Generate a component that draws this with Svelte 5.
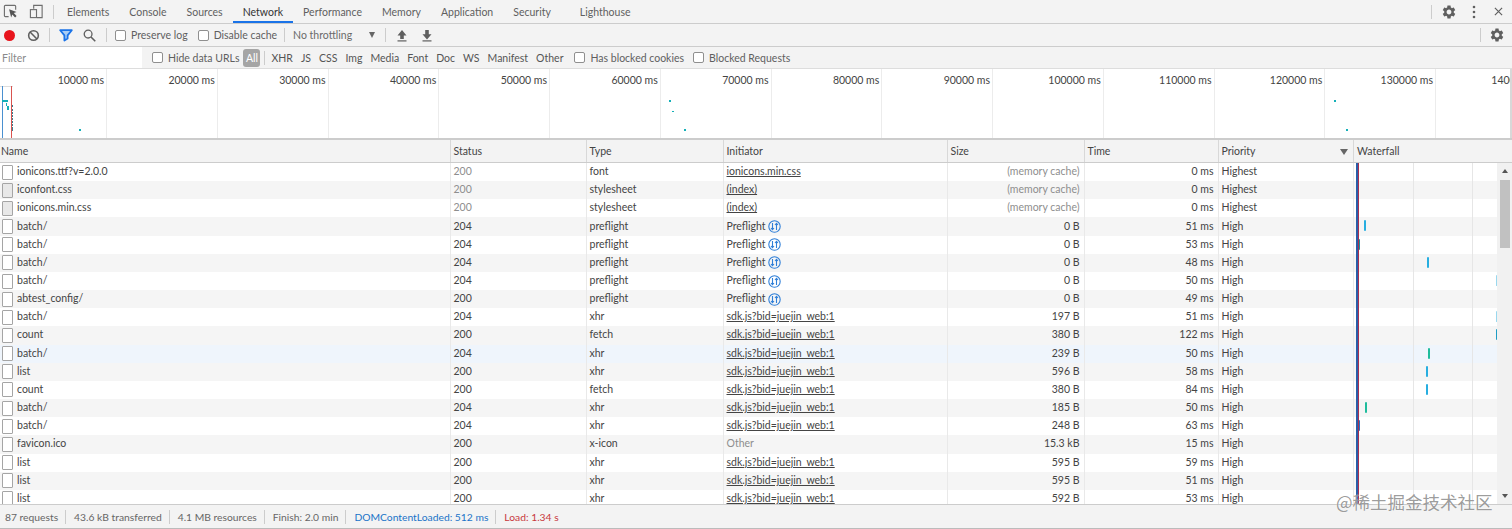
<script lang="ts">
	const gear =
		'M19.14 12.94c.04-.3.06-.61.06-.94 0-.32-.02-.64-.07-.94l2.03-1.58c.18-.14.23-.41.12-.61l-1.92-3.32c-.12-.22-.37-.29-.59-.22l-2.39.96c-.5-.38-1.03-.7-1.62-.94l-.36-2.54c-.04-.24-.24-.41-.48-.41h-3.84c-.24 0-.43.17-.47.41l-.36 2.54c-.59.24-1.13.57-1.62.94l-2.39-.96c-.22-.08-.47 0-.59.22L2.74 8.87c-.12.21-.08.47.12.61l2.03 1.58c-.05.3-.09.63-.09.94s.02.64.07.94l-2.03 1.58c-.18.14-.23.41-.12.61l1.92 3.32c.12.22.37.29.59.22l2.39-.96c.5.38 1.03.7 1.62.94l.36 2.54c.05.24.24.41.48.41h3.84c.24 0 .44-.17.47-.41l.36-2.54c.59-.24 1.13-.56 1.62-.94l2.39.96c.22.08.47 0 .59-.22l1.92-3.32c.12-.22.07-.47-.12-.61l-2.01-1.58zM12 15.6c-1.98 0-3.6-1.62-3.6-3.6s1.62-3.6 3.6-3.6 3.6 1.62 3.6 3.6-1.62 3.6-3.6 3.6z';

	const tabs = ['Elements', 'Console', 'Sources', 'Network', 'Performance', 'Memory', 'Application', 'Security', 'Lighthouse'];
	const types = ['XHR', 'JS', 'CSS', 'Img', 'Media', 'Font', 'Doc', 'WS', 'Manifest', 'Other'];
	const ticks = [10, 20, 30, 40, 50, 60, 70, 80, 90, 100, 110, 120, 130, 140];
	const columns = ['Name', 'Status', 'Type', 'Initiator', 'Size', 'Time', 'Priority', 'Waterfall'];

	const sdk = 'sdk.js?bid=juejin_web:1';
	type Bar = { left: number; color: string; w?: number };
	type Row = {
		name: string; status: number; type: string; init: string; size: string; time: string; prio: string;
		cached?: boolean; css?: boolean; hover?: boolean; bar?: Bar;
	};
	const rows: Row[] = [
		{ name: 'ionicons.ttf?v=2.0.0', status: 200, type: 'font', init: 'ionicons.min.css', size: '(memory cache)', time: '0 ms', prio: 'Highest', cached: true },
		{ name: 'iconfont.css', status: 200, type: 'stylesheet', init: '(index)', size: '(memory cache)', time: '0 ms', prio: 'Highest', cached: true, css: true },
		{ name: 'ionicons.min.css', status: 200, type: 'stylesheet', init: '(index)', size: '(memory cache)', time: '0 ms', prio: 'Highest', cached: true, css: true },
		{ name: 'batch/', status: 204, type: 'preflight', init: 'Preflight', size: '0 B', time: '51 ms', prio: 'High', bar: { left: 10, color: '#27aee0' } },
		{ name: 'batch/', status: 204, type: 'preflight', init: 'Preflight', size: '0 B', time: '53 ms', prio: 'High', bar: { left: 4, color: '#1c8f9c' } },
		{ name: 'batch/', status: 204, type: 'preflight', init: 'Preflight', size: '0 B', time: '48 ms', prio: 'High', bar: { left: 73, color: '#27aee0' } },
		{ name: 'batch/', status: 204, type: 'preflight', init: 'Preflight', size: '0 B', time: '50 ms', prio: 'High', bar: { left: 142, color: '#9ad8ee', w: 1 } },
		{ name: 'abtest_config/', status: 200, type: 'preflight', init: 'Preflight', size: '0 B', time: '49 ms', prio: 'High' },
		{ name: 'batch/', status: 204, type: 'xhr', init: sdk, size: '197 B', time: '51 ms', prio: 'High', bar: { left: 142, color: '#9ad8ee', w: 1 } },
		{ name: 'count', status: 200, type: 'fetch', init: sdk, size: '380 B', time: '122 ms', prio: 'High', bar: { left: 142, color: '#1e9cc4' } },
		{ name: 'batch/', status: 204, type: 'xhr', init: sdk, size: '239 B', time: '50 ms', prio: 'High', hover: true, bar: { left: 74, color: '#1fbc9c' } },
		{ name: 'list', status: 200, type: 'xhr', init: sdk, size: '596 B', time: '58 ms', prio: 'High', bar: { left: 72, color: '#27aee0' } },
		{ name: 'count', status: 200, type: 'fetch', init: sdk, size: '380 B', time: '84 ms', prio: 'High', bar: { left: 72, color: '#27aee0' } },
		{ name: 'batch/', status: 204, type: 'xhr', init: sdk, size: '185 B', time: '50 ms', prio: 'High', bar: { left: 11, color: '#1fbc9c' } },
		{ name: 'batch/', status: 204, type: 'xhr', init: sdk, size: '248 B', time: '63 ms', prio: 'High', bar: { left: 4, color: '#2a6fc0' } },
		{ name: 'favicon.ico', status: 200, type: 'x-icon', init: 'Other', size: '15.3 kB', time: '15 ms', prio: 'High' },
		{ name: 'list', status: 200, type: 'xhr', init: sdk, size: '595 B', time: '59 ms', prio: 'High' },
		{ name: 'list', status: 200, type: 'xhr', init: sdk, size: '595 B', time: '51 ms', prio: 'High' },
		{ name: 'list', status: 200, type: 'xhr', init: sdk, size: '592 B', time: '53 ms', prio: 'High' }
	];

	// marks on the overview strip: x, y, w, h
	const marks = [
		[2, 100, 6, 2], [6, 103, 1, 3], [7, 106, 2, 4], [79, 129, 2, 1.5], [669, 100, 2, 2],
		[672, 110.5, 2, 1.5], [684, 129, 2, 1.5], [1333.5, 99.5, 2, 2], [1346, 129, 2, 1.5]
	];
	const dashes = [105, 109, 112, 115, 118, 121, 124, 127, 129];
</script>

<div class="devtools">
	<div class="bar tabbar">
		<svg class="icon" style="margin-left:3px" viewBox="0 0 16 16" fill="none" stroke="#6e6e6e">
			<path d="M6 13.5H2.5a1 1 0 0 1-1-1v-10a1 1 0 0 1 1-1h10a1 1 0 0 1 1 1V6" stroke-width="1.2" />
			<path d="M6.5 5.5l8 3-3 1.2 3 3-1.6 1.6-3-3-1.2 3z" fill="#555" stroke="none" />
		</svg>
		<svg class="icon device" viewBox="0 0 16 16" fill="none" stroke="#6e6e6e" stroke-width="1.2">
			<path d="M5 5V1.5h9v13H8.5" />
			<rect x="1.5" y="6" width="6.5" height="8.5" />
		</svg>
		<span class="sep tab-sep"></span>
		<div class="tabs">
			{#each tabs as tab}
				<span class="tab" class:active={tab === 'Network'} class:last={tab === 'Lighthouse'}>{tab}</span>
			{/each}
		</div>
		<span class="sep end-sep"></span>
		<svg class="gear" viewBox="0 0 24 24" fill="#5f5f5f"><path d={gear} /></svg>
		<svg class="kebab" viewBox="0 0 4 14" fill="#5f5f5f"><circle cx="2" cy="2" r="1.3" /><circle cx="2" cy="7" r="1.3" /><circle cx="2" cy="12" r="1.3" /></svg>
		<svg class="close" viewBox="0 0 10 10" stroke="#5f5f5f" stroke-width="1.3"><path d="M1 1l8 8M9 1l-8 8" /></svg>
	</div>

	<div class="bar toolbar">
		<span class="record"></span>
		<svg class="clear" viewBox="0 0 14 14" fill="none" stroke="#5f5f5f" stroke-width="1.7"><circle cx="7" cy="7" r="5.2" /><path d="M3.3 3.3l7.4 7.4" /></svg>
		<span class="sep s1"></span>
		<svg class="funnel" viewBox="0 0 14 13" fill="none" stroke="#1a73e8" stroke-width="1.8"><path d="M1.2 1.2h11.6L8.6 6.4v3.2L5.4 11.6V6.4z" fill="#a9cdf5" stroke-linejoin="round" /></svg>
		<svg class="search" viewBox="0 0 14 14" fill="none" stroke="#5f5f5f" stroke-width="1.4"><circle cx="5.5" cy="5.5" r="4.2" /><path d="M8.6 8.6l4.6 4.6" stroke-width="1.7" /></svg>
		<span class="sep s2"></span>
		<label class="check c1"><span class="box"></span>Preserve log</label>
		<label class="check c2"><span class="box"></span>Disable cache</label>
		<span class="sep s3"></span>
		<span class="throttle">No throttling</span>
		<span class="caret"></span>
		<span class="sep s4"></span>
		<svg class="arrow up" viewBox="0 0 12 13" fill="#5f5f5f"><path d="M6 1L1.5 6.5h2.7v3.6h3.6V6.5h2.7z" /><rect x="1.5" y="11.3" width="9" height="1.2" /></svg>
		<svg class="arrow down" viewBox="0 0 12 13" fill="#5f5f5f"><path d="M4.2 1h3.6v4.2h2.7L6 10.4 1.5 5.2h2.7z" /><rect x="1.5" y="11.3" width="9" height="1.2" /></svg>
		<span class="sep s5"></span>
		<svg class="gear" viewBox="0 0 24 24" fill="#5f5f5f"><path d={gear} /></svg>
	</div>

	<div class="bar filterbar">
		<span class="filter">Filter</span>
		<label class="check hide"><span class="box"></span>Hide data URLs</label>
		<span class="pill">All</span>
		<span class="sep s6"></span>
		<div class="types">
			{#each types as t}<span>{t}</span>{/each}
		</div>
		<label class="check blocked"><span class="box"></span>Has blocked cookies</label>
		<label class="check blocked2"><span class="box"></span>Blocked Requests</label>
	</div>

	<div class="overview">
		{#each ticks as t}
			<div class="tick"><span>{t}000 ms</span></div>
		{/each}
		<i class="ov-top"></i>
		<i class="ov-line" style="left:2px;background:#4a90d0"></i>
		<i class="ov-line" style="left:11px;background:#d9534f"></i>
		{#each dashes as y}
			<i class="mark" style="left:12px;top:{y - 69}px;width:1px;height:1.5px;background:#3a7f90"></i>
		{/each}
		{#each marks as m}
			<i class="mark" style="left:{m[0]}px;top:{m[1] - 69}px;width:{m[2]}px;height:{m[3]}px"></i>
		{/each}
		<i class="ov-scroll"></i>
	</div>

	<div class="table">
		<div class="row head">
			{#each columns as c}
				<div class="cell">{c}{#if c === 'Priority'}<span class="sort"></span>{/if}</div>
			{/each}
		</div>
		<div class="rows">
			{#each rows as r, i}
				<div class="row" class:even={i % 2 === 1} class:hover={r.hover}>
					<div class="cell name"><span class="file" class:css={r.css}></span>{r.name}</div>
					<div class="cell" class:dim={r.cached}>{r.status}</div>
					<div class="cell">{r.type}</div>
					<div class="cell">
						{#if r.init === 'Preflight'}
							Preflight
							<svg class="pf" viewBox="0 0 13 13" fill="none" stroke="#2f7fd8" stroke-width="1.1"><circle cx="6.5" cy="6.5" r="5.7" /><path d="M4.5 3v6.5M3 8l1.5 1.7L6 8M8.5 10V3.5M7 5l1.5-1.7L10 5" /></svg>
						{:else if r.init === 'Other'}
							<span class="dim">Other</span>
						{:else}
							<u>{r.init}</u>
						{/if}
					</div>
					<div class="cell right" class:dim={r.cached}>{r.size}</div>
					<div class="cell right">{r.time}</div>
					<div class="cell">{r.prio}</div>
					<div class="cell fall">
						{#if r.bar}
							<i class="wbar" style="left:{r.bar.left}px;width:{r.bar.w ?? 2}px;background:{r.bar.color}"></i>
						{/if}
					</div>
				</div>
			{/each}
			<i class="vline" style="left:1413px;background:#e6e6e6"></i>
			<i class="vline" style="left:1472px;background:#e6e6e6"></i>
			<i class="vline" style="left:1356px;width:2px;background:#2a5ea8"></i>
			<i class="vline" style="left:1358px;background:#a83050"></i>
			<div class="scrollbar">
				<span class="tri"></span>
				<span class="thumb"></span>
				<span class="tri dn"></span>
			</div>
		</div>
	</div>

	<div class="status">
		<span>87 requests</span>
		<span>43.6 kB transferred</span>
		<span>4.1 MB resources</span>
		<span>Finish: 2.0 min</span>
		<span class="dcl">DOMContentLoaded: 512 ms</span>
		<span class="load">Load: 1.34 s</span>
	</div>

	<div class="watermark">@稀土掘金技术社区</div>
</div>

<style>
	:global(body) {
		margin: 0;
		background: #fff;
	}

	.devtools {
		position: relative;
		width: 1512px;
		height: 529px;
		overflow: hidden;
		display: flex;
		flex-direction: column;
		font-family: Lato, 'Noto Sans', sans-serif;
		font-size: 10.5px;
		color: #555;
	}

	.bar {
		display: flex;
		align-items: center;
		background: #f3f3f3;
		border-bottom: 1px solid #ccc;
		box-sizing: border-box;
		white-space: nowrap;
	}

	.tabbar { height: 24px; }
	.toolbar { height: 23px; }
	.filterbar { height: 22px; border-bottom: 1px solid #ddd; }

	.icon { width: 15px; height: 15px; flex-shrink: 0; }
	.device { margin-left: 11px; }

	.sep {
		width: 1px;
		height: 14px;
		background: #ccc;
		flex-shrink: 0;
	}

	.tab-sep { margin-left: 9px; }
	.tabs { display: flex; height: 100%; margin-left: 3px; }

	.tab {
		display: flex;
		align-items: center;
		padding: 0 10px;
		color: #5f5f5f;
		box-sizing: border-box;
	}

	.tab.active {
		color: #333;
		border-bottom: 2px solid #1a73e8;
		padding-top: 2px;
	}

	.tab.last { margin-left: 9px; }
	.end-sep { margin-left: auto; }

	.gear { width: 16px; height: 16px; flex-shrink: 0; }
	.tabbar .gear { margin-left: 9px; }
	.kebab { width: 4px; height: 14px; margin-left: 15px; }
	.close { width: 9px; height: 9px; margin-left: 18px; margin-right: 9px; }

	.record {
		width: 11px;
		height: 11px;
		border-radius: 50%;
		background: #e8141c;
		margin-left: 4px;
		flex-shrink: 0;
	}

	.clear { width: 13px; height: 13px; margin-left: 12px; }
	.s1 { margin-left: 9px; }
	.funnel { width: 14px; height: 13px; margin-left: 9px; }
	.search { width: 13px; height: 13px; margin-left: 10px; }
	.s2 { margin-left: 10px; }

	.check {
		display: flex;
		align-items: center;
		gap: 5px;
		color: #5f5f5f;
	}

	.box {
		width: 9px;
		height: 9px;
		border: 1px solid #8f8f8f;
		border-radius: 2px;
		background: #fff;
		flex-shrink: 0;
	}

	.c1 { margin-left: 8px; }
	.c2 { margin-left: 10px; }
	.s3 { margin-left: 7px; }
	.throttle { margin-left: 8px; color: #6a6a6a; }

	.caret {
		width: 0;
		height: 0;
		border-left: 3.5px solid transparent;
		border-right: 3.5px solid transparent;
		border-top: 6px solid #666;
		margin-left: 17px;
	}

	.s4 { margin-left: 10px; }
	.arrow { width: 12px; height: 13px; }
	.up { margin-left: 10px; }
	.down { margin-left: 13px; }
	.s5 { margin-left: auto; }
	.toolbar .gear { margin-left: 8px; margin-right: 7px; }

	.filter {
		width: 142px;
		height: 100%;
		background: #fff;
		color: #8a8a8a;
		padding-left: 2px;
		box-sizing: border-box;
		display: flex;
		align-items: center;
	}

	.hide { margin-left: 10px; }

	.pill {
		height: 18px;
		width: 17px;
		margin-left: 4px;
		background: #a5a5a5;
		color: #fff;
		border-radius: 3px;
		text-align: center;
		line-height: 18px;
		flex-shrink: 0;
	}

	.s6 { margin-left: 4px; }
	.types { display: flex; gap: 8px; margin-left: 6px; color: #555; }
	.blocked { margin-left: 11px; }
	.blocked2 { margin-left: 9px; }

	.overview {
		position: relative;
		display: flex;
		height: 71px;
		flex-shrink: 0;
		overflow: hidden;
		border-bottom: 2px solid #ccc;
		box-sizing: border-box;
		background: #fff;
		color: #444;
	}

	.tick {
		flex: 0 0 110.75px;
		box-sizing: border-box;
		border-right: 1px solid #ececec;
		text-align: right;
		padding: 5px 2px 0 0;
		white-space: nowrap;
	}

	.tick:first-child { margin-left: -3.75px; }

	.ov-top {
		position: absolute;
		left: 0;
		top: 17px;
		width: 13px;
		height: 1px;
		background: #ddd;
	}

	.ov-line {
		position: absolute;
		top: 17px;
		bottom: 0;
		width: 1px;
	}

	.mark {
		position: absolute;
		background: #14b0b8;
	}

	.ov-scroll {
		position: absolute;
		right: 0;
		top: 0;
		width: 2px;
		height: 100%;
		background: #d8d8d8;
	}

	.table {
		flex: 1;
		min-height: 0;
		display: flex;
		flex-direction: column;
	}

	.row {
		display: grid;
		grid-template-columns: 449.5px 136px 137px 224px 137px 134px 135.5px 159px;
		height: 18.17px;
		background: #fff;
		color: #444;
	}

	.row.even { background: #f5f5f5; }
	.row.hover { background: #eff5fc; }

	.row.head {
		height: 23px;
		background: #f3f3f3;
		border-bottom: 1px solid #ccc;
		box-sizing: border-box;
	}

	.head .cell {
		position: relative;
		border-left-color: #d8d8d8;
		color: #444;
		padding-bottom: 0;
	}

	.sort {
		position: absolute;
		right: 5px;
		top: 9px;
		border-left: 4px solid transparent;
		border-right: 4px solid transparent;
		border-top: 6px solid #666;
	}

	.cell {
		display: flex;
		align-items: center;
		gap: 2px;
		padding: 0 4px 2px 3px;
		border-left: 1px solid #e9e9e9;
		box-sizing: border-box;
		white-space: nowrap;
		overflow: hidden;
	}

	.cell:first-child {
		border-left: none;
		padding-left: 1px;
	}

	.cell.right { justify-content: flex-end; }
	.dim { color: #8e8e8e; }

	.cell.name { gap: 4px; padding-left: 2px; color: #444; }

	.file {
		width: 9px;
		height: 13px;
		border: 1px solid #a5a5a5;
		border-radius: 1px;
		background: #fff;
		flex-shrink: 0;
		margin-top: 2px;
	}

	.file.css { background: #e8e8e8; }
	.pf { width: 13px; height: 13px; flex-shrink: 0; margin-top: 2px; }
	u { text-underline-offset: 1px; }

	.fall {
		position: relative;
		overflow: visible;
	}

	.wbar {
		position: absolute;
		top: 3px;
		height: 11px;
		border-radius: 1px;
	}

	.rows {
		position: relative;
		flex: 1;
		min-height: 0;
		overflow: hidden;
	}

	.vline {
		position: absolute;
		top: 0;
		bottom: 0;
		width: 1px;
	}

	.scrollbar {
		position: absolute;
		left: 1497px;
		top: 0;
		bottom: 0;
		width: 15px;
		background: #f1f1f1;
		display: flex;
		flex-direction: column;
		align-items: center;
	}

	.tri {
		margin-top: 6px;
		border-left: 3px solid transparent;
		border-right: 3px solid transparent;
		border-bottom: 4px solid #555;
	}

	.tri.dn {
		margin-top: auto;
		margin-bottom: 6px;
		border-bottom: none;
		border-top: 4px solid #555;
	}

	.thumb {
		width: 10px;
		height: 68px;
		margin-top: 7px;
		background: #c1c1c1;
	}

	.status {
		display: flex;
		align-items: center;
		height: 25px;
		flex-shrink: 0;
		background: #f3f3f3;
		border-top: 1px solid #ccc;
		border-bottom: 1px solid #bbb;
		box-sizing: border-box;
		padding-left: 5px;
		font-size: 10.3px;
		color: #666;
		white-space: nowrap;
	}

	.status span { padding-right: 7px; margin-right: 8px; border-right: 1px solid #ccc; line-height: 14px; }
	.status span:last-child { border-right: none; }
	.dcl { color: #1a73c8; }
	.load { color: #c8383c; }

	.watermark {
		position: absolute;
		left: 1336px;
		top: 490px;
		font-family: 'Noto Sans CJK SC', sans-serif;
		font-size: 17.5px;
		line-height: 24px;
		color: rgba(90, 90, 90, 0.62);
		text-shadow: 0 0 1px #fff;
		white-space: nowrap;
	}
</style>
